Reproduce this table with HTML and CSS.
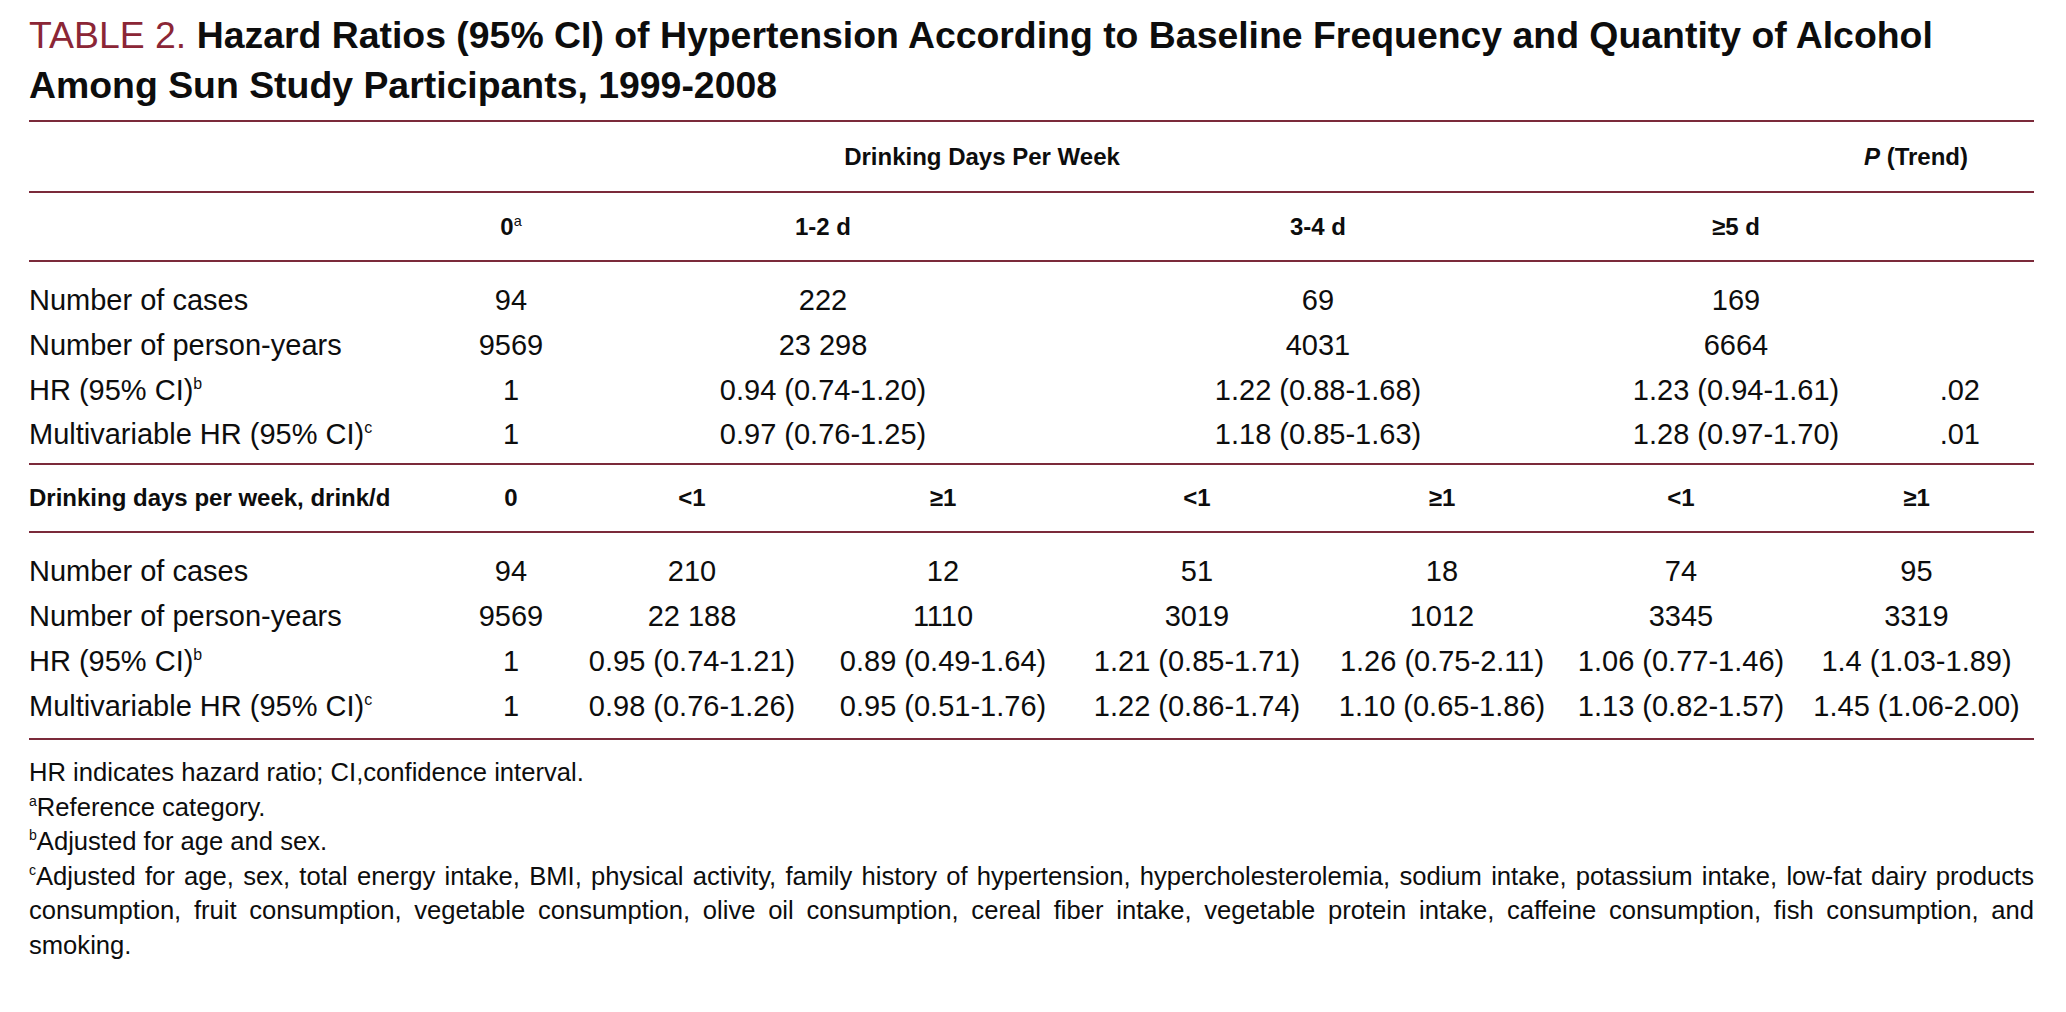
FILE: index.html
```html
<!DOCTYPE html>
<html lang="en">
<head>
<meta charset="utf-8">
<title>Table 2</title>
<link rel="stylesheet" href="styles.css">
</head>
<body>
<div class="page">
  <h1 class="title"><span class="label">TABLE 2.</span> Hazard Ratios (95% CI) of Hypertension According to Baseline Frequency and Quantity of Alcohol<br>Among Sun Study Participants, 1999-2008</h1>

  <div class="table">
    <div class="rule"></div>
    <div class="g1 head h1row">
      <div class="span-main">Drinking Days Per Week</div>
      <div class="ptrend-head"><i>P</i> (Trend)</div>
    </div>
    <div class="rule"></div>
    <div class="g1 head h2row">
      <div></div>
      <div class="c">0<sup>a</sup></div>
      <div class="c">1-2 d</div>
      <div class="c">3-4 d</div>
      <div class="c">≥5 d</div>
      <div></div>
    </div>
    <div class="rule"></div>
    <div class="g1 body b1">
      <div class="lbl">Number of cases</div><div class="c">94</div><div class="c">222</div><div class="c">69</div><div class="c">169</div><div class="p"></div>
      <div class="lbl">Number of person-years</div><div class="c">9569</div><div class="c">23 298</div><div class="c">4031</div><div class="c">6664</div><div class="p"></div>
      <div class="lbl">HR (95% CI)<sup>b</sup></div><div class="c">1</div><div class="c">0.94 (0.74-1.20)</div><div class="c">1.22 (0.88-1.68)</div><div class="c">1.23 (0.94-1.61)</div><div class="p">.02</div>
      <div class="lbl">Multivariable HR (95% CI)<sup>c</sup></div><div class="c">1</div><div class="c">0.97 (0.76-1.25)</div><div class="c">1.18 (0.85-1.63)</div><div class="c">1.28 (0.97-1.70)</div><div class="p">.01</div>
    </div>
    <div class="rule"></div>
    <div class="g2 head h3row">
      <div class="lbl">Drinking days per week, drink/d</div>
      <div class="c">0</div>
      <div class="c">&lt;1</div>
      <div class="c">≥1</div>
      <div class="c">&lt;1</div>
      <div class="c">≥1</div>
      <div class="c">&lt;1</div>
      <div class="c">≥1</div>
    </div>
    <div class="rule"></div>
    <div class="g2 body b2">
      <div class="lbl">Number of cases</div><div class="c">94</div><div class="c">210</div><div class="c">12</div><div class="c">51</div><div class="c">18</div><div class="c">74</div><div class="c">95</div>
      <div class="lbl">Number of person-years</div><div class="c">9569</div><div class="c">22 188</div><div class="c">1110</div><div class="c">3019</div><div class="c">1012</div><div class="c">3345</div><div class="c">3319</div>
      <div class="lbl">HR (95% CI)<sup>b</sup></div><div class="c">1</div><div class="c">0.95 (0.74-1.21)</div><div class="c">0.89 (0.49-1.64)</div><div class="c">1.21 (0.85-1.71)</div><div class="c">1.26 (0.75-2.11)</div><div class="c">1.06 (0.77-1.46)</div><div class="c">1.4 (1.03-1.89)</div>
      <div class="lbl">Multivariable HR (95% CI)<sup>c</sup></div><div class="c">1</div><div class="c">0.98 (0.76-1.26)</div><div class="c">0.95 (0.51-1.76)</div><div class="c">1.22 (0.86-1.74)</div><div class="c">1.10 (0.65-1.86)</div><div class="c">1.13 (0.82-1.57)</div><div class="c">1.45 (1.06-2.00)</div>
    </div>
    <div class="rule"></div>
  </div>

  <div class="notes">
    <p>HR indicates hazard ratio; CI,confidence interval.</p>
    <p><sup>a</sup>Reference category.</p>
    <p><sup>b</sup>Adjusted for age and sex.</p>
    <p class="just"><sup>c</sup><span>Adjusted for age, sex, total energy intake, BMI, physical activity, family history of hypertension, hypercholesterolemia, sodium intake, potassium intake, low-fat dairy products</span> <span>consumption, fruit consumption, vegetable consumption, olive oil consumption, cereal fiber intake, vegetable protein intake, caffeine consumption, fish consumption, and</span> <span>smoking.</span></p>
  </div>
</div>
</body>
</html>
```

FILE: styles.css
```css
html, body {
  margin: 0;
  padding: 0;
  background: #ffffff;
}

body {
  font-family: "Liberation Sans", Arial, sans-serif;
  color: #0d0d0d;
}

.page {
  width: 2005px;
  padding: 10px 0 0 29px;
}

.title {
  margin: 0 0 10px 0;
  font-size: 37.4px;
  line-height: 50px;
  font-weight: 700;
  color: #0d0d0d;
}

.title .label {
  font-weight: 400;
  color: #8b2636;
}

.rule {
  height: 2px;
  background: #7b2a3a;
}

.g1 {
  display: grid;
  grid-template-columns: 422px 120px 504px 486px 350px 123px;
}

.g2 {
  display: grid;
  grid-template-columns: 422px 120px 242px 260px 248px 242px 236px 235px;
}

.head {
  font-size: 24px;
  font-weight: 700;
  align-items: center;
}

.h1row { height: 69px; }
.h2row { height: 67px; }
.h3row { height: 66px; }

.span-main {
  grid-column: 1 / 6;
  grid-row: 1;
  text-align: center;
  padding-left: 24px;
}

.ptrend-head {
  grid-column: 5 / 7;
  grid-row: 1;
  text-align: right;
  padding-right: 66px;
  white-space: nowrap;
}

.body {
  font-size: 29px;
  line-height: 44.8px;
}

.b1 { padding: 16px 0 6px 0; }
.b2 { padding: 16px 0 10px 0; }

.c {
  text-align: center;
  white-space: nowrap;
}

.p {
  text-align: right;
  padding-right: 54px;
}

.lbl {
  white-space: nowrap;
}

sup {
  font-size: 0.55em;
  line-height: 0;
  vertical-align: super;
}

.head sup {
  font-size: 0.6em;
  font-weight: 400;
}

.notes {
  margin-top: 15px;
  font-size: 25.6px;
  line-height: 34.5px;
}

.notes p {
  margin: 0;
}

.notes sup {
  font-size: 0.55em;
}

.notes .just {
  text-align: justify;
}
```
